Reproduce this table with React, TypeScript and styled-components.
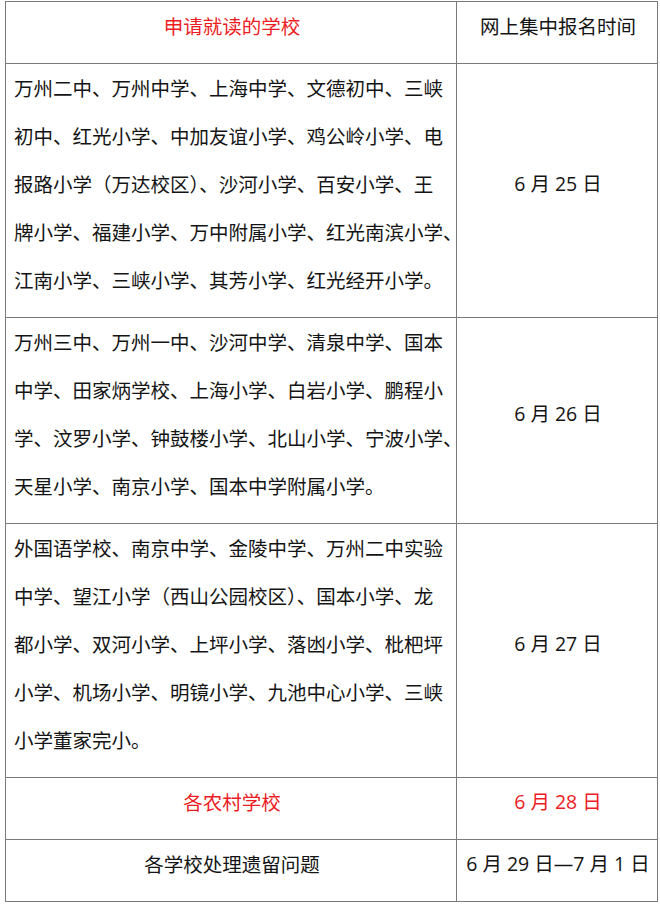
import styled, { createGlobalStyle } from 'styled-components'

const GlobalStyle = createGlobalStyle`
  body {
    margin: 0;
    background: #fff;
    font-family: "Noto Sans CJK SC", "Noto Sans", sans-serif;
  }
`

interface Row {
  lines: string[]
  date: string
  red?: boolean
  center?: boolean
}

const rows: Row[] = [
  {
    lines: [
      '万州二中、万州中学、上海中学、文德初中、三峡',
      '初中、红光小学、中加友谊小学、鸡公岭小学、电',
      '报路小学（万达校区）、沙河小学、百安小学、王',
      '牌小学、福建小学、万中附属小学、红光南滨小学、',
      '江南小学、三峡小学、其芳小学、红光经开小学。',
    ],
    date: '6 月 25 日',
  },
  {
    lines: [
      '万州三中、万州一中、沙河中学、清泉中学、国本',
      '中学、田家炳学校、上海小学、白岩小学、鹏程小',
      '学、汶罗小学、钟鼓楼小学、北山小学、宁波小学、',
      '天星小学、南京小学、国本中学附属小学。',
    ],
    date: '6 月 26 日',
  },
  {
    lines: [
      '外国语学校、南京中学、金陵中学、万州二中实验',
      '中学、望江小学（西山公园校区）、国本小学、龙',
      '都小学、双河小学、上坪小学、落凼小学、枇杷坪',
      '小学、机场小学、明镜小学、九池中心小学、三峡',
      '小学董家完小。',
    ],
    date: '6 月 27 日',
  },
  { lines: ['各农村学校'], date: '6 月 28 日', red: true, center: true },
  { lines: ['各学校处理遗留问题'], date: '6 月 29 日—7 月 1 日', center: true },
]

const Table = styled.table`
  margin: 1px 0 0 5px;
  width: 652px;
  border-collapse: collapse;
  table-layout: fixed;
`

const Cell = styled.td<{ $red?: boolean; $center?: boolean }>`
  border: 1px solid #7b7b7b;
  padding: 0 6px 13px 8px;
  font-size: 19.5px;
  line-height: 48px;
  color: ${(p) => (p.$red ? '#ec1c24' : '#141414')};
  text-align: ${(p) => (p.$center ? 'center' : 'left')};
  vertical-align: middle;
  white-space: nowrap;
`

const HeadCell = styled(Cell).attrs({ as: 'th' })`
  font-weight: normal;
  text-align: center;
`

const DateCell = styled(Cell)`
  font-family: "Open Sans", "Noto Sans CJK SC", sans-serif;
  text-align: center;
`

export default function App() {
  return (
    <>
      <GlobalStyle />
      <Table>
        <colgroup>
          <col style={{ width: 451 }} />
          <col style={{ width: 201 }} />
        </colgroup>
        <thead>
          <tr>
            <HeadCell $red>申请就读的学校</HeadCell>
            <HeadCell>网上集中报名时间</HeadCell>
          </tr>
        </thead>
        <tbody>
          {rows.map((r, i) => (
            <tr key={i}>
              <Cell $red={r.red} $center={r.center}>
                {r.lines.map((l, j) => (
                  <span key={j}>
                    {l}
                    {j < r.lines.length - 1 && <br />}
                  </span>
                ))}
              </Cell>
              <DateCell $red={r.red}>{r.date}</DateCell>
            </tr>
          ))}
        </tbody>
      </Table>
    </>
  )
}
